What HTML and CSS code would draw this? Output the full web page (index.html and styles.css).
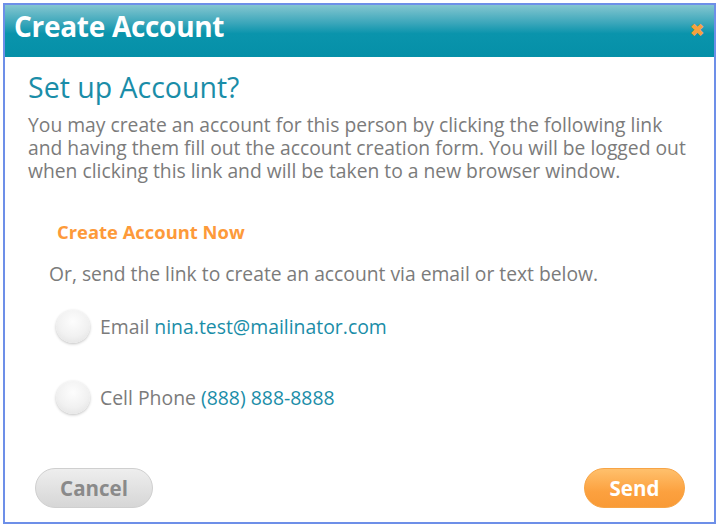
FILE: index.html
```html
<!DOCTYPE html>
<html lang="en">
<head>
  <meta charset="UTF-8">
  <title>Create Account</title>
  <link rel="stylesheet" href="styles.css">
</head>
<body>
  <div class="dialog">
    <div class="dialog-header">
      <div class="dialog-title">Create Account</div>
      <div class="close">&#10006;</div>
    </div>

    <div class="dialog-body">
      <h2 class="subtitle">Set up Account?</h2>
      <p class="intro">You may create an account for this person by clicking the following link and having them fill out the account creation form. You will be logged out when clicking this link and will be taken to a new browser window.</p>

      <a class="create-link" href="#">Create Account Now</a>

      <p class="or-text">Or, send the link to create an account via email or text below.</p>

      <div class="choice">
        <span class="radio"></span>
        <span class="choice-label">Email <span class="value">nina.test@mailinator.com</span></span>
      </div>
      <div class="choice">
        <span class="radio"></span>
        <span class="choice-label">Cell Phone <span class="value">(888) 888-8888</span></span>
      </div>
    </div>

    <div class="dialog-footer">
      <button class="btn btn-cancel">Cancel</button>
      <button class="btn btn-send">Send</button>
    </div>
  </div>
</body>
</html>
```

FILE: styles.css
```css
* {
  margin: 0;
  padding: 0;
  box-sizing: border-box;
}

html, body {
  height: 100%;
  background-color: #fff;
  font-family: "Open Sans", "Noto Sans", Arial, sans-serif;
  overflow: hidden;
}

.dialog {
  margin: 3px;
  width: 713px;
  height: 521px;
  border: 2px solid #6d8fe8;
  display: flex;
  flex-direction: column;
}

.dialog-header {
  height: 52px;
  display: flex;
  align-items: center;
  justify-content: space-between;
  padding: 0 10px 0 9px;
  background: linear-gradient(to bottom, #84c6d0 0%, #3aa6ba 35%, #0a94ac 55%, #0590a8 100%);
}

.dialog-title {
  color: #fff;
  font-size: 28px;
  font-weight: 700;
  letter-spacing: -0.3px;
  margin-top: -10px;
}

.close {
  color: #f7a13c;
  font-size: 17px;
  font-weight: 700;
  margin-top: -4px;
}

.dialog-body {
  flex: 1;
  padding: 10px 20px 0 23px;
}

.subtitle {
  color: #1a8da8;
  font-size: 28.5px;
  font-weight: 400;
  line-height: 40px;
}

.intro {
  color: #7b7b7b;
  font-size: 19.3px;
  line-height: 23px;
  margin-top: 6px;
}

.create-link {
  display: block;
  color: #fd9a3a;
  font-size: 18.4px;
  font-weight: 700;
  text-decoration: none;
  margin: 37px 0 0 29px;
}

.or-text {
  color: #7b7b7b;
  font-size: 19.3px;
  margin: 16px 0 0 21px;
}

.choice {
  display: flex;
  align-items: center;
  gap: 10px;
  margin: 21px 0 0 28px;
  height: 36px;
}

.choice + .choice {
  margin-top: 35px;
}

.radio {
  width: 34px;
  height: 33px;
  border-radius: 50%;
  background: radial-gradient(circle at 50% 35%, #fdfdfd 0%, #f1f1f1 55%, #dedede 100%);
  box-shadow: 0 1px 3px rgba(0, 0, 0, 0.25);
}

.choice-label {
  color: #7b7b7b;
  font-size: 19.4px;
}

.value {
  color: #1a8da8;
}

.dialog-footer {
  display: flex;
  justify-content: space-between;
  padding: 0 29px 14px 30px;
}

.btn {
  height: 40px;
  border-radius: 20px;
  font-family: "Open Sans", "Noto Sans", Arial, sans-serif;
  font-size: 20.5px;
  font-weight: 700;
  cursor: pointer;
}

.btn-cancel {
  width: 118px;
  color: #8a8a8a;
  border: 1px solid #cfcfcf;
  background: linear-gradient(to bottom, #eeeeee 0%, #d6d6d6 100%);
}

.btn-send {
  width: 101px;
  color: #fff;
  border: 1px solid #f7a445;
  background: linear-gradient(to bottom, #ffc06c 0%, #fca13f 60%, #f99a36 100%);
}
```
